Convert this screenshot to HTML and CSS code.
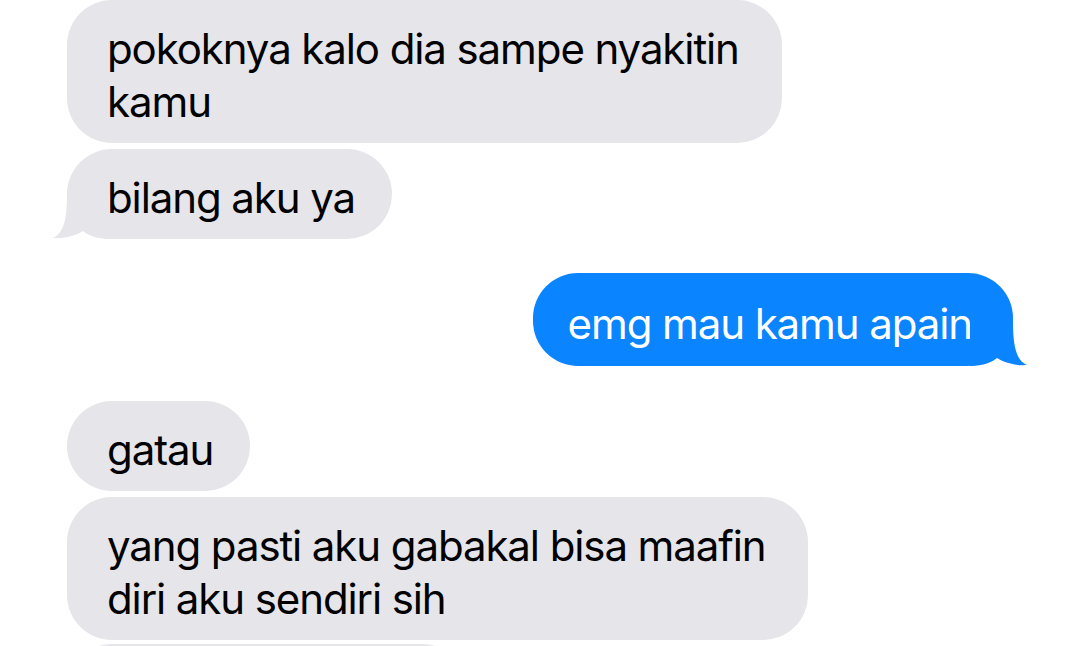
FILE: index.html
```html
<!DOCTYPE html>
<html>
<head>
<meta charset="utf-8">
<link rel="stylesheet" href="styles.css">
</head>
<body>
<div class="thread">
  <div class="bubble recv wide">pokoknya kalo dia sampe nyakitin<br>kamu</div>
  <div class="bubble recv tailed">bilang aku ya
    <svg class="tail tail-left" width="60" height="50" viewBox="0 0 60 50"><path d="M17,5 C17,30 14,44 3,49 C15,50 27,46 33,42 C38,46 46,50 60,50 L60,5 Z" fill="#e5e5ea"/></svg>
  </div>
  <div class="bubble sent tailed">emg mau kamu apain
    <svg class="tail tail-right" width="60" height="50" viewBox="0 0 60 50"><path d="M43,5 C43,30 46,44 57,49 C45,50 33,46 27,42 C22,46 14,50 0,50 L0,5 Z" fill="#0a84ff"/></svg>
  </div>
  <div class="bubble recv">gatau</div>
  <div class="bubble recv wide">yang pasti aku gabakal bisa maafin<br>diri aku sendiri sih</div>
  <div class="bubble recv next">&nbsp;</div>
</div>
</body>
</html>
```
FILE: styles.css
```css
html, body {
  margin: 0;
  padding: 0;
  background: #ffffff;
  width: 1080px;
  height: 646px;
  overflow: hidden;
}
.thread {
  display: flex;
  flex-direction: column;
  align-items: flex-start;
  gap: 6px;
  padding: 0 67px;
  font-family: Inter, "Liberation Sans", sans-serif;
  font-size: 42px;
  line-height: 53px;
  letter-spacing: -1.1px;
}
.bubble {
  position: relative;
  padding: 22px 37px 15px 40px;
  border-radius: 45px;
  box-sizing: border-box;
}
.recv {
  background: #e5e5ea;
  color: #000;
}
.wide {
  padding-right: 43px;
}
.next {
  margin-top: -2px;
  width: 400px;
}
.sent {
  background: #0a84ff;
  color: #fff;
  align-self: flex-end;
  padding: 24px 41px 16px 35px;
  margin-top: 28px;
  margin-bottom: 29px;
}
.tail {
  position: absolute;
  bottom: 0;
}
.tail-left {
  left: -17px;
}
.tail-right {
  right: -17px;
}
```
